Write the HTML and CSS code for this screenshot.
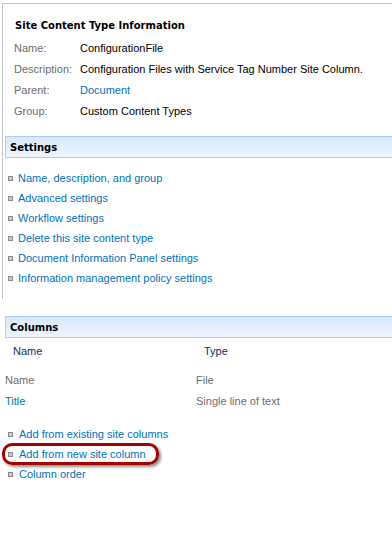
FILE: index.html
```html
<!DOCTYPE html>
<html>
<head>
<meta charset="utf-8">
<link rel="stylesheet" href="styles.css">
</head>
<body>
<div class="frame">
  <div class="info">
    <div class="title">Site Content Type Information</div>
    <div class="row"><span class="label">Name:</span><span class="value">ConfigurationFile</span></div>
    <div class="row"><span class="label">Description:</span><span class="value">Configuration Files with Service Tag Number Site Column.</span></div>
    <div class="row"><span class="label">Parent:</span><a class="value link">Document</a></div>
    <div class="row"><span class="label">Group:</span><span class="value">Custom Content Types</span></div>
  </div>
  <div class="section-header">Settings</div>
  <ul class="links">
    <li><span class="bullet"></span><a class="link">Name, description, and group</a></li>
    <li><span class="bullet"></span><a class="link">Advanced settings</a></li>
    <li><span class="bullet"></span><a class="link">Workflow settings</a></li>
    <li><span class="bullet"></span><a class="link">Delete this site content type</a></li>
    <li><span class="bullet"></span><a class="link">Document Information Panel settings</a></li>
    <li><span class="bullet"></span><a class="link">Information management policy settings</a></li>
  </ul>
</div>
<div class="columns">
  <div class="section-header">Columns</div>
  <div class="grid">
    <div class="head">Name</div><div class="head">Type</div>
    <div class="cell grey first">Name</div><div class="cell grey first">File</div>
    <div class="cell"><a class="link">Title</a></div><div class="cell grey">Single line of text</div>
  </div>
  <ul class="links links2">
    <li><span class="bullet"></span><a class="link">Add from existing site columns</a></li>
    <li class="marked"><span class="bullet"></span><a class="link">Add from new site column</a><span class="callout"></span></li>
    <li><span class="bullet"></span><a class="link">Column order</a></li>
  </ul>
</div>
</body>
</html>
```

FILE: styles.css
```css
html, body {
  margin: 0;
  padding: 0;
  background: #fff;
}
body {
  width: 392px;
  height: 542px;
  overflow: hidden;
  font-family: "Liberation Sans", Arial, sans-serif;
  font-size: 11px;
  color: #000;
}
.frame {
  margin: 3px 0 0 2px;
  border-top: 1px solid #c4c4c4;
  border-left: 1px solid #c4c4c4;
  padding-bottom: 11px;
}
.info {
  padding: 14px 0 0 11px;
}
.title {
  font-family: "DejaVu Sans", Verdana, sans-serif;
  font-weight: bold;
  font-size: 10px;
  line-height: 16px;
  height: 16px;
  margin-left: 1px;
  margin-bottom: 4px;
}
.row {
  display: flex;
  height: 21px;
  line-height: 21px;
  white-space: nowrap;
}
.label {
  width: 66px;
  flex: none;
  color: #6d6d6d;
}
.link {
  color: #0072bc;
  text-decoration: none;
}
.section-header {
  margin: 14px 0 0 2px;
  height: 20px;
  line-height: 21px;
  border: 1px solid #a9cdf3;
  border-right: none;
  background: linear-gradient(#d9e8fd, #edf5fe);
  font-family: "DejaVu Sans", Verdana, sans-serif;
  font-weight: bold;
  font-size: 10px;
  padding-left: 4px;
}
.links {
  list-style: none;
  margin: 0;
  padding: 10px 0 0 5px;
}
.links li {
  display: flex;
  align-items: center;
  height: 20px;
  line-height: 20px;
  position: relative;
  white-space: nowrap;
}
.bullet {
  width: 3px;
  height: 3px;
  border: 1px solid #8c8c8c;
  background: #c9c9c9;
  margin-right: 5px;
  flex: none;
}
.columns {
  padding-left: 3px;
}
.columns .section-header {
  margin-top: 17px;
}
.grid {
  display: grid;
  grid-template-columns: 191px 1fr;
  margin-left: 2px;
  padding-top: 2px;
}
.head {
  height: 22px;
  line-height: 22px;
  padding-left: 8px;
  color: #0b3163;
  margin-bottom: 8px;
}
.cell {
  height: 21px;
  line-height: 21px;
}
.grey {
  color: #6d6d6d;
}
.links2 {
  padding-top: 12px;
}
.links2 .link {
  margin-left: 1px;
}
.callout {
  position: absolute;
  left: -6px;
  top: -1px;
  width: 157px;
  height: 22px;
  box-sizing: border-box;
  border: 3px solid #a30000;
  border-radius: 10px;
  box-shadow: 2px 2px 3px rgba(0,0,0,0.45);
}
```
